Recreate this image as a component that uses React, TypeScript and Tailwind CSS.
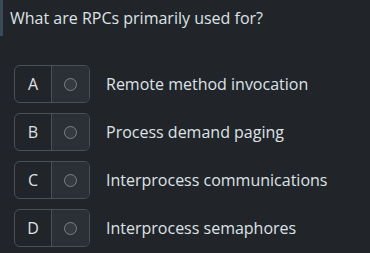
const options = [
    { key: "A", label: "Remote method invocation" },
    { key: "B", label: "Process demand paging" },
    { key: "C", label: "Interprocess communications" },
    { key: "D", label: "Interprocess semaphores" },
];

export default function App() {
    return (
        <div
            className="w-[370px] h-[253px] bg-[#212529] text-[#dee2e6] overflow-hidden"
            style={{ fontFamily: '"Open Sans", "Noto Sans", sans-serif' }}
        >
            <div className="flex items-stretch h-[36px]">
                <div className="w-[3px] bg-[#3b4a59]" />
                <p className="pl-[7px] pt-[7px] text-[16px] leading-[22px]">
                    What are RPCs primarily used for?
                </p>
            </div>

            <div className="flex flex-col gap-[10px] pt-[29px] pl-[14px]">
                {options.map((opt) => (
                    <label key={opt.key} className="flex items-center">
                        <div className="flex h-[38px] rounded-[6px] border border-[#495057] overflow-hidden">
                            <span className="flex w-[37px] items-center justify-center border-r border-[#495057] text-[16px]">
                                {opt.key}
                            </span>
                            <span className="flex w-[37px] items-center justify-center bg-[#2b3035]">
                                <span className="w-[13px] h-[13px] rounded-full border border-[#7a8087] bg-[#343a40]" />
                            </span>
                        </div>
                        <span className="pl-[16px] text-[16px]">{opt.label}</span>
                    </label>
                ))}
            </div>
        </div>
    );
}
